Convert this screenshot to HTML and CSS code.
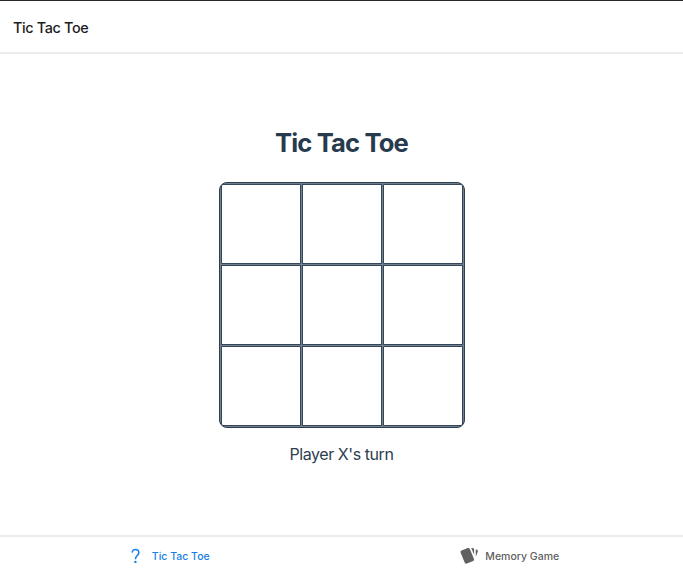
FILE: index.html
```html
<!DOCTYPE html>
<html lang="en">
<head>
<meta charset="utf-8">
<title>Tic Tac Toe</title>
<link rel="stylesheet" href="styles.css">
</head>
<body>
<header class="header">Tic Tac Toe</header>
<main class="game">
  <h1 class="title">Tic Tac Toe</h1>
  <div class="board">
    <div class="cell"></div><div class="cell"></div><div class="cell"></div>
    <div class="cell"></div><div class="cell"></div><div class="cell"></div>
    <div class="cell"></div><div class="cell"></div><div class="cell"></div>
  </div>
  <p class="status">Player X's turn</p>
</main>
<nav class="tabs">
  <a class="tab active">
    <svg class="icon" viewBox="0 0 20 20" fill="none" stroke="currentColor"><path d="M6.3 6.6C6.2 4.4 7.6 3.5 9.4 3.5C11.5 3.5 12.8 4.8 12.8 6.7C12.8 9.5 9.5 9.6 9.4 13.2" stroke-width="1.6"/><circle cx="9.4" cy="15.9" r="1.2" fill="currentColor" stroke="none"/></svg>
    <span>Tic Tac Toe</span>
  </a>
  <a class="tab">
    <svg class="icon" viewBox="0 0 24 24" fill="currentColor"><path d="M21.47 4.35l-1.34-.56v9.03l2.43-5.86c.41-1.02-.06-2.19-1.09-2.61m-19.5 3.7L6.93 20a2.01 2.01 0 0 0 1.81 1.26c.26 0 .53-.05.79-.16l7.37-3.05c.75-.31 1.21-1.05 1.23-1.79.01-.26-.04-.55-.13-.81L13 3.5a1.954 1.954 0 0 0-1.81-1.25c-.26 0-.52.06-.77.15L3.06 5.45a1.994 1.994 0 0 0-1.09 2.6m16.15-3.8a2 2 0 0 0-2-2h-1.45l3.45 8.34z"/></svg>
    <span>Memory Game</span>
  </a>
</nav>
</body>
</html>
```
FILE: styles.css
```css
* { box-sizing: border-box; }
body {
  margin: 0;
  height: 576px;
  display: flex;
  flex-direction: column;
  background: #fff;
  font-family: Inter, "Liberation Sans", sans-serif;
}
.header {
  height: 54px;
  padding: 1px 13px 0;
  display: flex;
  align-items: center;
  border-top: 1px solid #29292b;
  border-bottom: 2px solid #ebebeb;
  font-size: 14.4px;
  font-weight: 500;
  letter-spacing: -0.35px;
  color: #1c1c1e;
}
.game {
  flex: 1;
  display: flex;
  flex-direction: column;
  align-items: center;
  padding-top: 73px;
  color: #2c3e50;
}
.title {
  margin: 0 0 23px;
  font-size: 25.6px;
  line-height: 32px;
  font-weight: 700;
  letter-spacing: -0.85px;
  color: #273a4e;
}
.board {
  width: 246px;
  height: 246px;
  display: grid;
  grid-template-columns: repeat(3, 80px);
  grid-template-rows: repeat(3, 80px);
  gap: 1px;
  padding: 1px;
  border: 1px solid #2c3e50;
  border-radius: 8px;
  background: #73818e;
}
.cell {
  border: 1px solid #34475a;
  background: #fff;
}
.cell:first-child { border-top-left-radius: 2px; }
.cell:nth-child(3) { border-top-right-radius: 2px; }
.cell:nth-child(7) { border-bottom-left-radius: 2px; }
.cell:last-child { border-bottom-right-radius: 2px; }
.status {
  margin: 16px 0 0;
  font-size: 16px;
  line-height: 20px;
  letter-spacing: -0.43px;
}
.tabs {
  height: 41px;
  display: flex;
  padding-bottom: 1px;
  border-top: 2px solid #ebebeb;
}
.tab {
  flex: 1;
  display: flex;
  align-items: center;
  justify-content: center;
  gap: 6px;
  font-size: 10.5px;
  font-weight: 500;
  color: #606060;
}
.active { color: #1680e5; }
.icon {
  width: 20px;
  height: 20px;
  margin-left: -6px;
}
```
